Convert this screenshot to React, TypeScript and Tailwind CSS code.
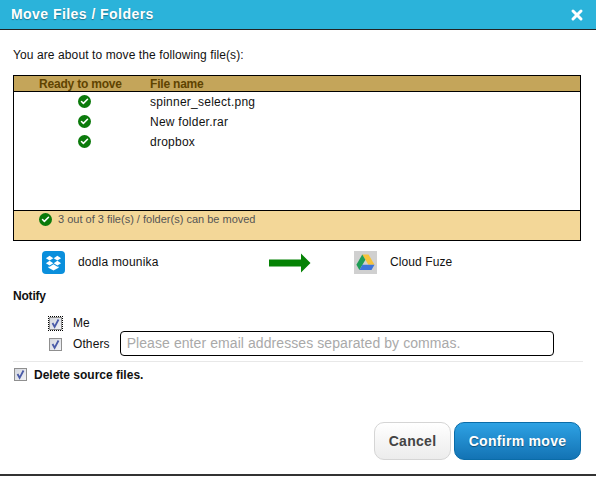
import React from 'react'
import { Check, X } from 'lucide-react'

const files = ['spinner_select.png', 'New folder.rar', 'dropbox']

function GreenCheck() {
  return (
    <span className="flex h-[13px] w-[13px] shrink-0 items-center justify-center rounded-full bg-[#0b7a0b]">
      <Check size={9} strokeWidth={4} className="text-white" />
    </span>
  )
}

function CheckBox({ focused }: { focused?: boolean }) {
  return (
    <span className={`flex h-[13px] w-[13px] items-center justify-center border border-[#8f8f8f] bg-gradient-to-br from-[#d4d7de] to-[#f2f3f6] ${focused ? 'outline-1 outline-dotted outline-black' : ''}`}>
      <svg width="11" height="11" viewBox="0 0 11 11">
        <path d="M2.5 5 L4.6 8.8 L8.5 1.5" fill="none" stroke="#4a5ba8" strokeWidth="1.8" />
      </svg>
    </span>
  )
}

function DropboxLogo() {
  return (
    <span className="flex h-[23px] w-[23px] items-center justify-center rounded-[4px] bg-[#0a8fdc]">
      <svg width="17" height="16" viewBox="0 0 17 16" fill="#fff">
        <path d="M4.6 0.8 L8.3 3.2 L4.6 5.6 L0.9 3.2 Z" />
        <path d="M12.4 0.8 L16.1 3.2 L12.4 5.6 L8.7 3.2 Z" />
        <path d="M4.6 5.8 L8.3 8.2 L4.6 10.6 L0.9 8.2 Z" />
        <path d="M12.4 5.8 L16.1 8.2 L12.4 10.6 L8.7 8.2 Z" />
        <path d="M3.4 11.4 L4.6 11.8 L8.5 9.2 L12.4 11.8 L13.6 11.4 V12.8 L8.5 15.6 L3.4 12.8 Z" />
      </svg>
    </span>
  )
}

function DriveLogo() {
  return (
    <span className="flex h-[23px] w-[23px] items-center justify-center bg-[#d0d0d0]">
      <svg width="19" height="17" viewBox="0 0 19 17">
        <path d="M6.3 0.5 L12.5 0.5 L18.5 10.8 L12.4 10.8 Z" fill="#f6c33b" />
        <path d="M6.3 0.5 L9.4 5.7 L3.4 16 L0.4 10.8 Z" fill="#1f9d57" />
        <path d="M6.4 10.8 L18.5 10.8 L15.5 16 L3.4 16 Z" fill="#3d74db" />
      </svg>
    </span>
  )
}

function GreenArrow() {
  return (
    <svg width="42" height="20" viewBox="0 0 42 20">
      <path d="M0 6.5 H32 V0.5 L41.5 10 L32 19.5 V13.5 H0 Z" fill="#058205" />
    </svg>
  )
}

export default function App() {
  return (
    <div className="h-[478px] w-[601px] bg-white font-['Liberation_Sans',Arial,sans-serif] text-[12px] text-[#111]">
      <div className="flex h-[476px] w-[596px] flex-col border-b-2 border-[#333]">
        <div className="flex h-[30px] items-center justify-between border-b border-[#222] bg-[#2bb3da] pl-[11px] pr-[11px]">
          <h1 className="text-[14px] font-bold tracking-[0.45px] text-white [text-shadow:0_1px_1px_rgba(0,0,0,0.35)]">
            Move Files / Folders
          </h1>
          <X size={16} strokeWidth={4.5} className="text-white" />
        </div>

        <div className="flex flex-1 flex-col px-[13px]">
          <p className="mt-[18px] h-[14px] leading-[14px] tracking-[0.1px]">You are about to move the following file(s):</p>

          <div className="mt-[13px] flex h-[166px] w-[568px] flex-col border border-black">
            <div className="flex h-[16px] items-center border-b border-black bg-[#c4a55a] font-bold tracking-[-0.2px] text-[#5f4300]">
              <span className="w-[136px] pl-[25px]">Ready to move</span>
              <span>File name</span>
            </div>
            <div className="flex flex-1 flex-col">
              {files.map((name) => (
                <div key={name} className="flex h-[20px] items-center tracking-[0.25px]">
                  <span className="flex w-[136px] justify-center pl-[5px] pb-[2px]">
                    <GreenCheck />
                  </span>
                  <span>{name}</span>
                </div>
              ))}
            </div>
            <div className="flex h-[30px] items-start gap-[6px] border-t border-black bg-[#f3d798] pl-[25px] pt-[2px] text-[11px] leading-[13px] text-[#555]">
              <GreenCheck />
              <span>3 out of 3 file(s) / folder(s) can be moved</span>
            </div>
          </div>

          <div className="mt-[10px] flex h-[23px] items-center">
            <span className="ml-[29px]">
              <DropboxLogo />
            </span>
            <span className="ml-[13px] w-[191px] -translate-y-px tracking-[0.2px]">dodla mounika</span>
            <GreenArrow />
            <span className="ml-[43px]">
              <DriveLogo />
            </span>
            <span className="ml-[13px] -translate-y-px tracking-[0.1px]">Cloud Fuze</span>
          </div>

          <h2 className="mt-[15px] font-bold leading-[14px] tracking-[-0.2px]">Notify</h2>

          <div className="mt-[13px] flex h-[14px] items-center pl-[36px]">
            <CheckBox focused />
            <span className="ml-[11px]">Me</span>
          </div>
          <div className="mt-[2px] flex h-[24px] items-center pl-[36px]">
            <CheckBox />
            <span className="ml-[11px] tracking-[0.1px]">Others</span>
            <input
              readOnly
              placeholder="Please enter email addresses separated by commas."
              className="ml-[10px] h-[25px] w-[434px] -translate-y-px rounded-[4px] border border-black px-[6px] text-[14px] tracking-[0.08px] placeholder:text-[#a9a9a9]"
            />
          </div>

          <div className="mt-[5px] flex h-[26px] items-center gap-[7px] border-t border-[#e8e8e8] pl-px">
            <CheckBox />
            <span className="font-bold">Delete source files.</span>
          </div>

          <div className="mt-auto mb-[14px] flex justify-end gap-[3px] pr-[2px]">
            <button className="h-[38px] w-[77px] rounded-[10px] border border-[#d5d5d5] bg-gradient-to-b from-white to-[#ececec] text-[14px] font-bold tracking-[0.3px] text-[#444]">
              Cancel
            </button>
            <button className="h-[38px] w-[127px] rounded-[10px] border border-[#0a6ca8] bg-gradient-to-b from-[#2ea2e4] to-[#1373b4] text-[14px] font-bold tracking-[0.3px] text-white [text-shadow:0_1px_1px_rgba(0,0,0,0.4)]">
              Confirm move
            </button>
          </div>
        </div>
      </div>
    </div>
  )
}
